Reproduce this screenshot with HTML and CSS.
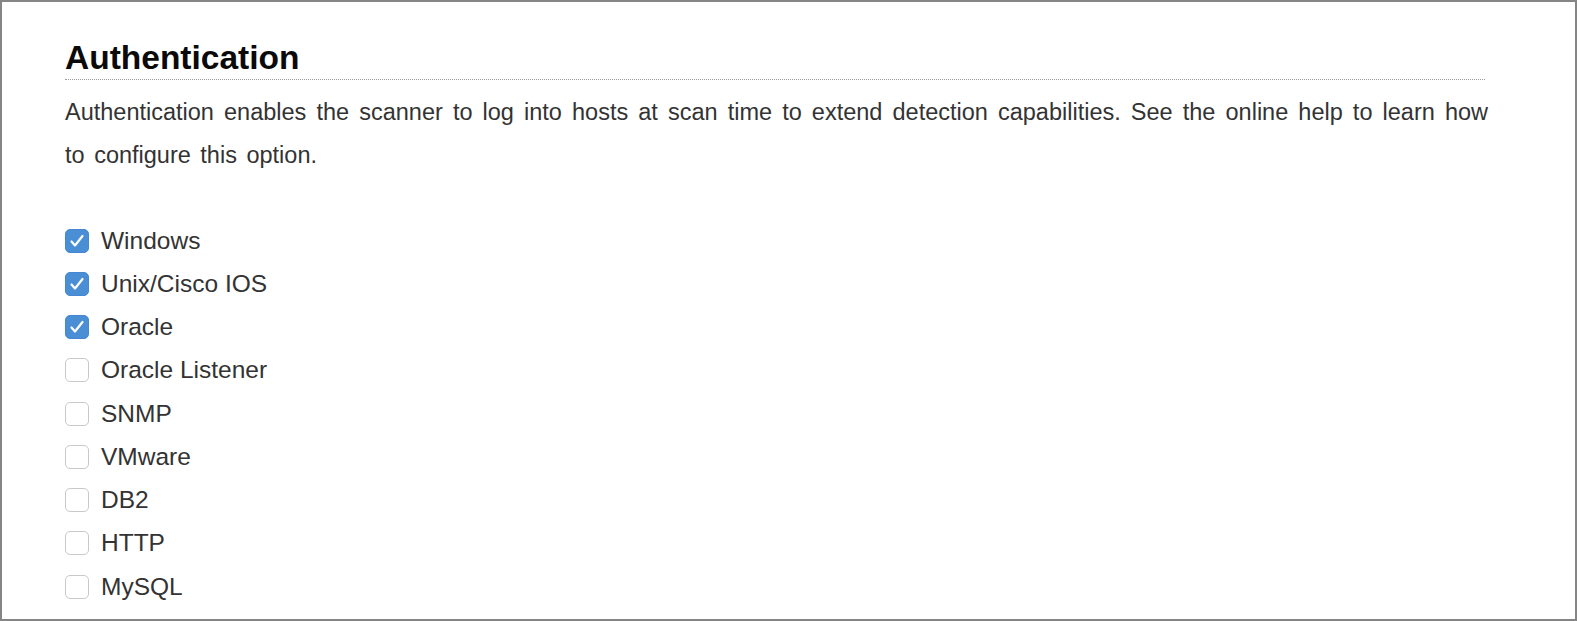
FILE: index.html
```html
<!DOCTYPE html>
<html lang="en">
<head>
    <meta charset="UTF-8">
    <title>Authentication</title>
    <link rel="stylesheet" href="styles.css">
</head>
<body>
    <div class="frame">
        <div class="section">
            <h2 class="section-title">Authentication</h2>
            <p class="section-text">Authentication enables the scanner to log into hosts at scan time to extend detection capabilities. See the online help to learn how to configure this option.</p>
            <div class="option-list">
                <label class="option"><span class="check checked"><svg viewBox="0 0 22 22"><polyline points="5.5,11.5 9,15.5 16.5,6"/></svg></span>Windows</label>
                <label class="option"><span class="check checked"><svg viewBox="0 0 22 22"><polyline points="5.5,11.5 9,15.5 16.5,6"/></svg></span>Unix/Cisco IOS</label>
                <label class="option"><span class="check checked"><svg viewBox="0 0 22 22"><polyline points="5.5,11.5 9,15.5 16.5,6"/></svg></span>Oracle</label>
                <label class="option"><span class="check"></span>Oracle Listener</label>
                <label class="option"><span class="check"></span>SNMP</label>
                <label class="option"><span class="check"></span>VMware</label>
                <label class="option"><span class="check"></span>DB2</label>
                <label class="option"><span class="check"></span>HTTP</label>
                <label class="option"><span class="check"></span>MySQL</label>
            </div>
        </div>
    </div>
</body>
</html>
```

FILE: styles.css
```css
html, body {
    margin: 0;
    padding: 0;
    background-color: #fff;
    font-family: "Liberation Sans", Arial, sans-serif;
}
.frame {
    height: 100vh;
    box-sizing: border-box;
    border: 2px solid #858585;
    padding: 39px 87px 0 63px;
    overflow: hidden;
}
.section-title {
    margin: 0 3px 0 0;
    font-size: 33.5px;
    font-weight: bold;
    color: #0a0a0a;
    line-height: 34px;
    padding-bottom: 4px;
    border-bottom: 1px dotted #9a9a9a;
}
.section-text {
    margin: 11px 0 0;
    font-size: 23.5px;
    line-height: 43px;
    word-spacing: 3px;
    text-align: justify;
    color: #333;
}
.option-list {
    display: flex;
    flex-direction: column;
    margin-top: 42px;
}
.option {
    display: flex;
    align-items: center;
    gap: 12px;
    height: 43.25px;
    font-size: 24.5px;
    color: #333;
}
.check {
    width: 22px;
    height: 22px;
    border: 1px solid #c9c9c9;
    border-radius: 5px;
    background: #fff;
    flex-shrink: 0;
}
.check.checked {
    background: #4a8ed6;
    border-color: #4587d1;
}
.check svg {
    display: block;
    width: 22px;
    height: 22px;
    fill: none;
    stroke: #fff;
    stroke-width: 2.2;
    stroke-linecap: round;
    stroke-linejoin: round;
}
```
